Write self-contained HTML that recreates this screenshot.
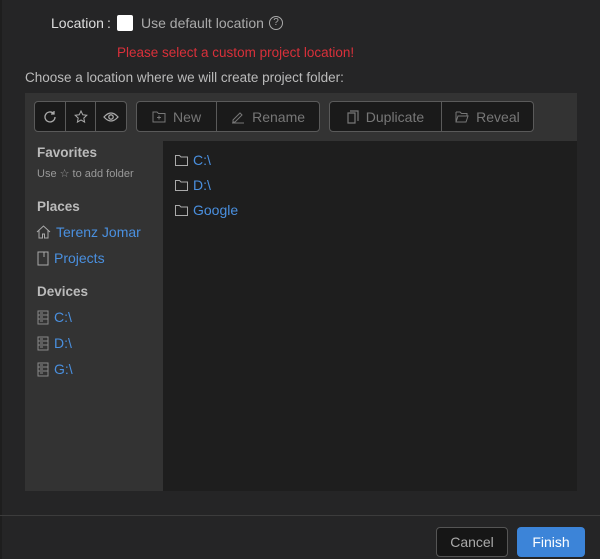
<!DOCTYPE html><html><head><style>
body{margin:0;width:600px;height:559px;background:#252526;font-family:"Liberation Sans",sans-serif;font-size:14px;color:#ccc;position:relative;overflow:hidden}
.a{position:absolute}
.grp{position:absolute;top:101px;height:31px;border:1px solid #5a5a5a;border-radius:4px;background:#1a1a1a;display:flex;box-sizing:border-box}
.grp div{display:flex;align-items:center;justify-content:center;color:#777;border-right:1px solid #5a5a5a;gap:7px}
.grp div:last-child{border-right:none}
.h{font-weight:bold;color:#bbb;font-size:13.5px}
.lk{color:#4a90e0;display:flex;align-items:center;gap:5px}
svg{display:block}
</style></head><body>
<div class="a" style="left:0;top:0;width:2px;height:559px;background:#1e1e1e"></div>
<div class="a" style="left:51px;top:15px;color:#ddd">Location<span style="margin-left:3px">:</span></div>
<div class="a" style="left:117px;top:15px;width:16px;height:16px;background:#fff;border-radius:2px"></div>
<div class="a" style="left:141px;top:15px;color:#aaa">Use default location</div>
<div class="a" style="left:269px;top:16px;width:12px;height:12px;border:1.3px solid #aaa;border-radius:50%;font-size:10px;line-height:12px;text-align:center;color:#aaa">?</div>
<div class="a" style="left:117px;top:45px;color:#d9303a;font-size:13.5px">Please select a custom project location!</div>
<div class="a" style="left:25px;top:70px;color:#bbb;font-size:13.5px">Choose a location where we will create project folder:</div>
<div class="a" style="left:25px;top:93px;width:552px;height:48px;background:#333"></div>
<div class="a" style="left:25px;top:141px;width:138px;height:350px;background:#333"></div>
<div class="a" style="left:163px;top:141px;width:414px;height:350px;background:#1e1e1e"></div>
<div class="grp" style="left:34px;width:93px">
<div style="width:31px"><svg width="14" height="14" viewBox="0 0 14 14"><path d="M12 7a5 5 0 1 1-1.5-3.6M11 1v3H8" fill="none" stroke="#aaa" stroke-width="1.3"/></svg></div>
<div style="width:31px"><svg width="14" height="14" viewBox="0 0 14 14"><path d="M7 1l1.8 3.8 4 .5-3 2.8.8 4L7 10l-3.6 2.1.8-4-3-2.8 4-.5z" fill="none" stroke="#aaa" stroke-width="1"/></svg></div>
<div style="width:31px"><svg width="16" height="12" viewBox="0 0 16 12"><path d="M1 6q7-8 14 0q-7 8-14 0z" fill="none" stroke="#aaa" stroke-width="1.3"/><circle cx="8" cy="6" r="2.2" fill="none" stroke="#aaa" stroke-width="1.3"/></svg></div>
</div>
<div class="grp" style="left:136px;width:184px">
<div style="width:80px"><svg width="14" height="12" viewBox="0 0 14 12"><path d="M1 1h4l1.5 1.5H13V11H1z M7 4.5v4M5 6.5h4" fill="none" stroke="#777" stroke-width="1"/></svg>New</div>
<div style="width:103px"><svg width="14" height="14" viewBox="0 0 14 14"><path d="M2 10l7-7 2 2-7 7H2zM1 13h12" fill="none" stroke="#777" stroke-width="1"/></svg>Rename</div></div>
<div class="grp" style="left:329px;width:205px">
<div style="width:112px"><svg width="12" height="14" viewBox="0 0 12 14"><path d="M3 1h8v10M1 3h7v10H1z" fill="none" stroke="#777" stroke-width="1.2"/></svg>Duplicate</div>
<div style="width:92px"><svg width="14" height="12" viewBox="0 0 14 12"><path d="M1 1h4l1.5 1.5H12V5M1 1v10h10l2-6H3l-2 6" fill="none" stroke="#777" stroke-width="1"/></svg>Reveal</div></div>
<div class="a h" style="left:37px;top:145px">Favorites</div>
<div class="a" style="left:37px;top:167px;font-size:11px;color:#999">Use ☆ to add folder</div>
<div class="a h" style="left:37px;top:199px">Places</div>
<div class="a lk" style="left:36px;top:224px"><svg width="15" height="14" viewBox="0 0 15 14"><path d="M1 7L7.5 1 14 7M3 5.5V13h3.5V9h2v4H12V5.5" fill="none" stroke="#aaa" stroke-width="1"/></svg>Terenz Jomar</div>
<div class="a lk" style="left:37px;top:250px"><svg width="12" height="15" viewBox="0 0 12 15"><path d="M1 1h10v13H1zM7 1v5" fill="none" stroke="#aaa" stroke-width="1"/></svg>Projects</div>
<div class="a h" style="left:37px;top:284px">Devices</div>
<div class="a lk" style="left:37px;top:309px"><svg width="12" height="15" viewBox="0 0 12 15"><path d="M1 1h10v13H1zM1 5h10M1 9h10M3 3h3M3 7h3M3 11h3" fill="none" stroke="#888" stroke-width="1"/></svg>C:\</div>
<div class="a lk" style="left:37px;top:335px"><svg width="12" height="15" viewBox="0 0 12 15"><path d="M1 1h10v13H1zM1 5h10M1 9h10M3 3h3M3 7h3M3 11h3" fill="none" stroke="#888" stroke-width="1"/></svg>D:\</div>
<div class="a lk" style="left:37px;top:361px"><svg width="12" height="15" viewBox="0 0 12 15"><path d="M1 1h10v13H1zM1 5h10M1 9h10M3 3h3M3 7h3M3 11h3" fill="none" stroke="#888" stroke-width="1"/></svg>G:\</div>
<div class="a lk" style="left:175px;top:152px"><svg width="13" height="11" viewBox="0 0 13 11"><path d="M.5.5h4l1.5 1.5h6.5v8.5H.5z" fill="none" stroke="#aaa" stroke-width="1"/></svg>C:\</div>
<div class="a lk" style="left:175px;top:177px"><svg width="13" height="11" viewBox="0 0 13 11"><path d="M.5.5h4l1.5 1.5h6.5v8.5H.5z" fill="none" stroke="#aaa" stroke-width="1"/></svg>D:\</div>
<div class="a lk" style="left:175px;top:202px"><svg width="13" height="11" viewBox="0 0 13 11"><path d="M.5.5h4l1.5 1.5h6.5v8.5H.5z" fill="none" stroke="#aaa" stroke-width="1"/></svg>Google</div>
<div class="a" style="left:0;top:515px;width:600px;height:1px;background:#3c3c3c"></div>
<div class="a" style="left:436px;top:527px;width:72px;height:30px;box-sizing:border-box;border:1px solid #555;border-radius:4px;background:#161616;color:#aaa;text-align:center;line-height:28px">Cancel</div>
<div class="a" style="left:517px;top:527px;width:68px;height:30px;border-radius:4px;background:#3c84d8;color:#fff;text-align:center;line-height:30px">Finish</div>
</body></html>
